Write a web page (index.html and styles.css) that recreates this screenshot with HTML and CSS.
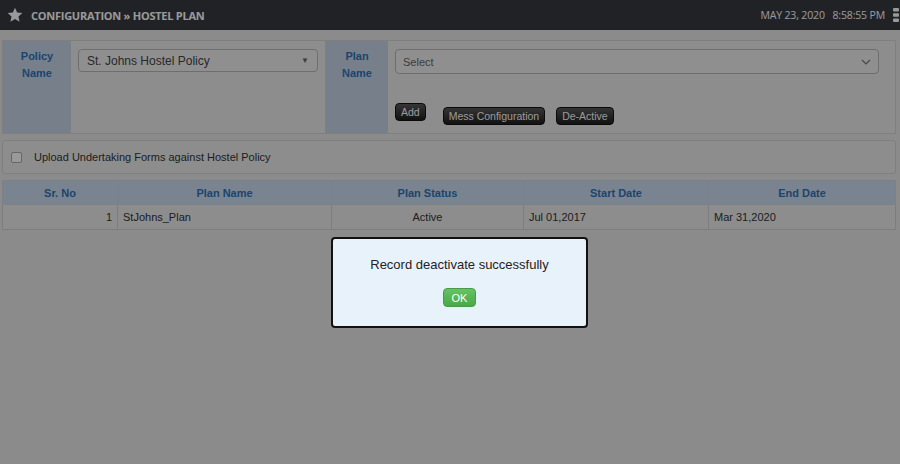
FILE: index.html
```html
<!DOCTYPE html>
<html lang="en">
<head>
    <meta charset="UTF-8">
    <meta name="viewport" content="width=device-width, initial-scale=1.0">
    <title>Hostel Plan</title>
    <link rel="stylesheet" href="styles.css">
</head>
<body>
    <div class="header">
        <div class="header-left">
            <svg class="star" width="16" height="16" viewBox="0 0 24 24">
                <polygon points="12,1 15.2,8.2 23,9 17.2,14.3 18.8,22 12,18 5.2,22 6.8,14.3 1,9 8.8,8.2" fill="currentColor"></polygon>
            </svg>
            <h1>Configuration &raquo; Hostel Plan</h1>
        </div>
        <div class="header-right">
            <span class="clock">MAY 23, 2020&nbsp;&nbsp;&nbsp;8:58:55 PM</span>
            <svg class="menu-dots" width="6" height="16" viewBox="0 0 6 16">
                <rect x="0" y="1" width="6" height="3.5" rx="1" fill="currentColor"></rect>
                <rect x="0" y="6.3" width="6" height="3.5" rx="1" fill="currentColor"></rect>
                <rect x="0" y="11.6" width="6" height="3.5" rx="1" fill="currentColor"></rect>
            </svg>
        </div>
    </div>

    <div class="content">
        <div class="form-panel">
            <div class="label-cell">Policy<br>Name</div>
            <div class="field-cell policy-field">
                <div class="select-box policy-select">
                    <span>St. Johns Hostel Policy</span>
                    <span class="caret">&#9660;</span>
                </div>
            </div>
            <div class="label-cell plan-label">Plan<br>Name</div>
            <div class="field-cell plan-field">
                <div class="select-box plan-select">
                    <span>Select</span>
                    <svg class="chevron" width="10" height="6" viewBox="0 0 10 6">
                        <polyline points="1,1 5,5 9,1" fill="none" stroke="currentColor" stroke-width="1.2"></polyline>
                    </svg>
                </div>
                <div class="button-row">
                    <button class="dark-btn add-btn">Add</button>
                    <button class="dark-btn">Mess Configuration</button>
                    <button class="dark-btn">De-Active</button>
                </div>
            </div>
        </div>

        <div class="check-panel">
            <span class="checkbox"></span>
            <span>Upload Undertaking Forms against Hostel Policy</span>
        </div>

        <table class="plan-table">
            <thead>
                <tr>
                    <th class="col-no">Sr. No</th>
                    <th class="col-name">Plan Name</th>
                    <th class="col-status">Plan Status</th>
                    <th class="col-start">Start Date</th>
                    <th>End Date</th>
                </tr>
            </thead>
            <tbody>
                <tr>
                    <td class="num">1</td>
                    <td>StJohns_Plan</td>
                    <td class="center">Active</td>
                    <td>Jul 01,2017</td>
                    <td>Mar 31,2020</td>
                </tr>
            </tbody>
        </table>
    </div>

    <div class="overlay">
        <div class="dialog">
            <p>Record deactivate successfully</p>
            <button class="ok-btn">OK</button>
        </div>
    </div>
</body>
</html>
```

FILE: styles.css
```css
* {
    margin: 0;
    padding: 0;
    box-sizing: border-box;
}

body {
    font-family: "Liberation Sans", Arial, sans-serif;
    font-size: 11px;
    background-color: #e8e8e8;
    color: #333;
    width: 900px;
    height: 464px;
    overflow: hidden;
}

.header {
    height: 30px;
    background-color: #373a40;
    color: #fff;
    display: flex;
    align-items: center;
    justify-content: space-between;
    padding-left: 7px;
}

.header-left {
    display: flex;
    align-items: center;
    gap: 8px;
}

.header h1 {
    font-family: "Open Sans", sans-serif;
    font-size: 11px;
    font-weight: 700;
    text-transform: uppercase;
    letter-spacing: -0.25px;
}

.header-right {
    display: flex;
    align-items: center;
    gap: 8px;
    margin-right: 1px;
}

.clock {
    font-family: "Open Sans", sans-serif;
    font-size: 10.5px;
    letter-spacing: -0.15px;
}

.content {
    padding: 10px 4px 0 2px;
}

.form-panel {
    display: flex;
    height: 94px;
    border: 1px solid #d4d4d4;
    background-color: #ececec;
}

.label-cell {
    width: 68px;
    background-color: #c6d4e8;
    color: #3272b6;
    font-weight: 700;
    text-align: center;
    line-height: 17px;
    padding-top: 7px;
}

.plan-label {
    width: 62px;
}

.field-cell {
    padding: 8px 7px 0 7px;
}

.policy-field {
    width: 255px;
    border-right: 1px solid #d4d4d4;
}

.plan-field {
    flex: 1;
    padding-right: 16px;
}

.select-box {
    display: flex;
    align-items: center;
    justify-content: space-between;
    border: 1px solid #b8b8b8;
    border-radius: 4px;
    background-color: #efefef;
}

.policy-select {
    height: 23px;
    padding: 0 8px;
    font-size: 12px;
    color: #444;
}

.caret {
    font-size: 8px;
    color: #666;
}

.plan-select {
    height: 25px;
    padding: 0 7px 0 7px;
    color: #666;
}

.chevron {
    color: #777;
}

.button-row {
    display: flex;
    align-items: flex-start;
    gap: 11px;
    margin-top: 29px;
}

.dark-btn {
    font-family: "Liberation Sans", Arial, sans-serif;
    font-size: 10.5px;
    color: #fff;
    background: linear-gradient(#5a5a5a, #1e1e1e);
    border: 1px solid #111;
    border-radius: 4px;
    height: 18px;
    padding: 0 5px;
    margin-top: 4px;
}

.add-btn {
    margin-top: 0;
    margin-right: 6px;
}

.check-panel {
    display: flex;
    align-items: center;
    gap: 12px;
    height: 34px;
    margin-top: 6px;
    padding-left: 8px;
    border: 1px solid #d4d4d4;
    border-radius: 3px;
    background-color: #ececec;
    color: #333;
}

.checkbox {
    width: 11px;
    height: 11px;
    border: 1px solid #aaa;
    border-radius: 2px;
    background-color: #fff;
}

.plan-table {
    width: 894px;
    margin-top: 6px;
    border-collapse: collapse;
    background-color: #ececec;
}

.plan-table th {
    height: 24px;
    background-color: #cadcf0;
    color: #3272b6;
    font-weight: 700;
    border: 1px solid #cfd8e2;
}

.plan-table td {
    height: 25px;
    padding: 0 5px;
    border: 1px solid #d0d0d0;
    color: #333;
}

.col-no { width: 115px; }
.col-name { width: 214px; }
.col-status { width: 192px; }
.col-start { width: 185px; }

.plan-table td.num {
    text-align: right;
}

.plan-table td.center {
    text-align: center;
}

.overlay {
    position: fixed;
    inset: 0;
    background-color: rgba(0, 0, 0, 0.4);
}

.dialog {
    position: absolute;
    left: 331px;
    top: 237px;
    width: 257px;
    height: 91px;
    background-color: #e8f2fb;
    border: 2px solid #111;
    border-radius: 4px;
    text-align: center;
    padding-top: 18px;
}

.dialog p {
    font-size: 13px;
    color: #222;
}

.ok-btn {
    margin-top: 16px;
    width: 33px;
    height: 19px;
    font-family: "Liberation Sans", Arial, sans-serif;
    font-size: 11px;
    color: #fff;
    background: linear-gradient(#62c462, #4aa84a);
    border: 1px solid #4a9a4a;
    border-radius: 4px;
}
```
